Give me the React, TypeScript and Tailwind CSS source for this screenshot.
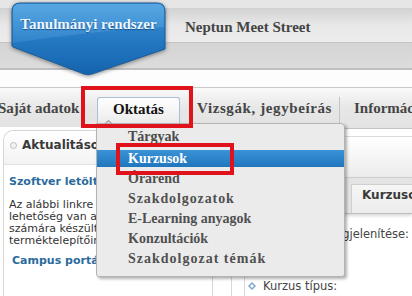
import React from 'react';

const menu = [
  { label: 'Tárgyak', extra: '' },
  { label: 'Kurzusok', extra: '' },
  { label: 'Órarend', extra: '' },
  { label: 'Szakdolgozatok', extra: '[letter-spacing:0.9px]' },
  { label: 'E-Learning anyagok', extra: '' },
  { label: 'Konzultációk', extra: '' },
  { label: 'Szakdolgozat témák', extra: '[letter-spacing:1px]' },
];

function Badge() {
  return (
    <div className="absolute left-[10px] top-[1px] w-[157px] h-[78px]">
      <svg width="157" height="78" viewBox="0 0 157 78" className="drop-shadow-[0_1px_2px_rgba(0,0,0,0.45)]">
        <defs>
          <linearGradient id="badgeFill" x1="0" y1="0" x2="0" y2="1">
            <stop offset="0" stopColor="#3f95d8" />
            <stop offset="0.55" stopColor="#2277c1" />
            <stop offset="1" stopColor="#1564ad" />
          </linearGradient>
          <linearGradient id="gloss" x1="0" y1="0" x2="0" y2="1">
            <stop offset="0" stopColor="#6cb6ec" stopOpacity="0.55" />
            <stop offset="1" stopColor="#5aa6e2" stopOpacity="0.25" />
          </linearGradient>
        </defs>
        <path
          d="M10,2 H147 Q155,2 155,10 V48 L82,73 Q78,74.5 74,73 L3,46 Q2,45.5 2,44 V10 Q2,2 10,2 Z"
          fill="url(#badgeFill)"
          stroke="#1a5d9c"
          strokeWidth="1"
        />
        <path d="M10,3 H147 Q154,3 154,10 V26 Q80,30 3,42 V10 Q3,3 10,3 Z" fill="url(#gloss)" />
      </svg>
      <div className="absolute left-[2px] top-[14px] w-[153px] text-center font-['Liberation_Serif',serif] font-bold text-[15px] leading-[18px] text-[#eef7ff] [text-shadow:0_1px_1px_rgba(0,40,90,0.6)]">
        Tanulmányi rendszer
      </div>
    </div>
  );
}

export default function App() {
  return (
    <div className="relative w-[412px] h-[296px] overflow-hidden bg-white">
      {/* header bands */}
      <div className="h-[8px] bg-[#e6e6e6]" />
      <div className="h-[35px] bg-gradient-to-b from-[#d2d2d2] via-[#e8e8e8] to-[#ececec] border-b border-[#c5c5c5] pl-[185px] pt-[6px]">
        <span className="font-['Liberation_Serif',serif] font-bold text-[15px] leading-[18px] text-[#454545]">
          Neptun Meet Street
        </span>
      </div>
      <div className="h-[27px] bg-gradient-to-b from-[#d4d4d4] to-[#dcdcdc] border-b-2 border-[#bfbfbf]" />
      <div className="h-[18px] bg-[#fdfdfd] border-b border-[#c9c9c9]" />

      {/* main tabs */}
      <div className="h-[39px] flex items-end overflow-hidden bg-gradient-to-b from-[#fafafa] via-[#e7e7e7] to-[#e3e3e3] font-['Liberation_Serif',serif] font-bold text-[15px] leading-[18px]">
        <div className="shrink-0 h-[30px] ml-[-2px] w-[99px] pt-[2px] text-[#454545] whitespace-nowrap">Saját adatok</div>
        <div className="shrink-0 h-[30px] w-[83px] pt-[2px] text-center text-[#111] border-x border-t border-[#a9bfd3] rounded-t-[3px] bg-gradient-to-b from-white to-[#e8e8e8]">
          Oktatás
        </div>
        <div className="shrink-0 h-[30px] pl-[17px] pr-[7px] pt-[2px] text-[#454545] whitespace-nowrap [letter-spacing:0.6px] border-r border-[#c4c4c4]">
          Vizsgák, jegybeírás
        </div>
        <div className="shrink-0 h-[30px] pl-[14px] pt-[2px] text-[#454545] whitespace-nowrap">Információ</div>
      </div>

      {/* content */}
      <div className="flex">
        <div className="w-[231px] shrink-0 pl-[3px] pr-[18px] pt-[3px]">
          <div className="border-l border-t border-r border-[#d6d6d6] rounded-tl-[10px] h-[170px]">
            <div className="h-[34px] border-b border-[#e2e2e2] rounded-tl-[10px] bg-gradient-to-b from-white to-[#f3f3f3] flex items-start pt-[7px] pl-[6px] gap-[5px]">
              <span className="mt-[4px] w-[7px] h-[7px] rounded-full border border-[#bdbdbd] bg-[#f2f2f2]" />
              <span className="font-['DejaVu_Sans',sans-serif] font-bold text-[12px] leading-[14px] text-[#3a3a3a] whitespace-nowrap">
                Aktualitások
              </span>
            </div>
            <div className="pl-[5px] pt-[10px] font-['DejaVu_Sans',sans-serif] whitespace-nowrap overflow-hidden">
              <div className="font-bold text-[11px] leading-[14px] text-[#2b6b9c]">Szoftver letöltés</div>
              <div className="mt-[10px] text-[11px] leading-[12px] text-[#333]">
                <div>Az alábbi linkre kattintva</div>
                <div>lehetőség van a hallgatók</div>
                <div>számára készült szoftverek</div>
                <div>terméktelepítőinek letöltésére.</div>
              </div>
              <div className="mt-[7px] pl-[3px] font-bold text-[11px] leading-[14px] text-[#2b6b9c]">Campus portál</div>
            </div>
          </div>
        </div>

        <div className="flex-1 min-w-0 border-l border-[#d8d8d8] font-['DejaVu_Sans',sans-serif]">
          <div className="h-[1px] bg-[#e3e3e3]" />
          <div className="border-t border-[#c4c4c4] h-[8px] bg-white" />
          <div className="border-t border-[#dcdcdc] h-[41px] bg-gradient-to-b from-white to-[#ececec]" />
          <div className="border-t border-[#cdcdcd] border-b border-b-[#bdbdbd] h-[37px] bg-[#e4e4e4] flex items-end pl-[119px] shadow-[0_2px_3px_rgba(0,0,0,0.15)]">
            <div className="h-[29px] w-full border-l border-t border-[#cfcfcf] bg-gradient-to-b from-[#f6f6f6] to-[#ececec] pl-[10px] pt-[3px] font-bold text-[12px] leading-[14px] text-[#3a3a3a] whitespace-nowrap">
              Kurzusok
            </div>
          </div>
          <div className="h-[42px] flex items-center justify-end pr-[3px] text-[11.5px] text-[#444] whitespace-nowrap">
            Kurzusok megjelenítése:
          </div>
          <div className="ml-[12px] border-l border-[#dadada] h-[60px] pt-[23px] pl-[3px] flex items-start gap-[7px] text-[11.5px] leading-[14px] text-[#444] whitespace-nowrap">
            <svg width="8" height="8" viewBox="0 0 8 8" className="mt-[3px]">
              <path d="M4,0 L8,4 L4,8 L0,4 Z" fill="#7fa6cc" />
              <path d="M4,2 L6,4 L4,6 L2,4 Z" fill="#ffffff" />
            </svg>
            <span>Kurzus típus:</span>
          </div>
        </div>
      </div>

      {/* dropdown menu */}
      <div className="absolute left-[96px] top-[123px] w-[249px] h-[154px] bg-[#ebebeb] border border-[#b3b3b3] rounded-tr-[4px] rounded-b-[3px] shadow-[2px_2px_3px_rgba(0,0,0,0.3)] pt-[2px] font-['Liberation_Serif',serif] font-bold text-[14px] leading-[18px]">
        {menu.map((item, i) => (
          <div
            key={item.label}
            className={
              (i === 1
                ? 'mt-[2px] mb-[2px] h-[17px] flex items-center pl-[31px] text-white bg-gradient-to-b from-[#3a93d6] to-[#2076bd] '
                : i === 0
                ? 'h-[22px] flex items-center pl-[31px] text-[#4a4a4a] '
                : 'h-[20px] flex items-center pl-[31px] text-[#505050] ') + item.extra
            }
          >
            {item.label}
          </div>
        ))}
      </div>
      <svg width="9" height="6" viewBox="0 0 9 6" className="absolute left-[104px] top-[119px]">
        <path d="M1,5 L4.5,1.5 L8,5" fill="none" stroke="#a0a0a0" strokeWidth="1.2" />
      </svg>

      <Badge />

      {/* highlight boxes */}
      <div className="absolute left-[81px] top-[86px] w-[112px] h-[42px] border-4 border-[#e0121c]" />
      <div className="absolute left-[116px] top-[143px] w-[118px] h-[32px] border-4 border-[#e0121c]" />
    </div>
  );
}
